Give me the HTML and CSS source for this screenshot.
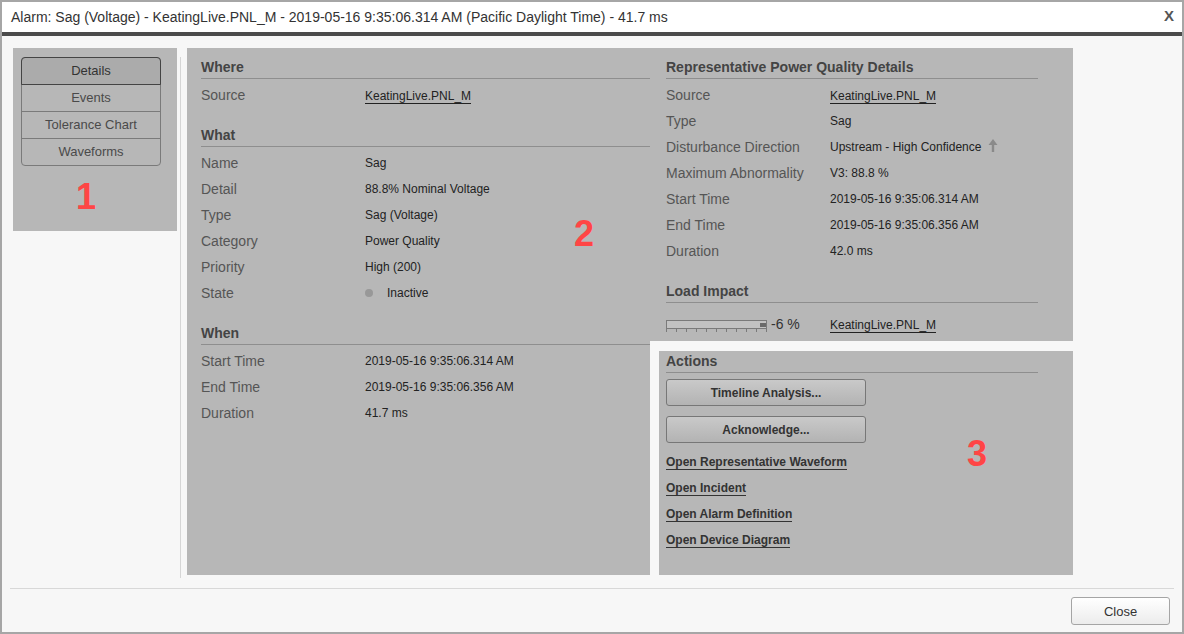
FILE: index.html
```html
<!DOCTYPE html>
<html lang="en">
<head>
    <meta charset="UTF-8">
    <meta name="viewport" content="width=device-width, initial-scale=1.0">
    <title>Alarm Details</title>
    <link rel="stylesheet" href="styles.css">
</head>
<body>
    <div class="dialog">
        <div class="title-bar">
            <span class="title">Alarm: Sag (Voltage) - KeatingLive.PNL_M - 2019-05-16 9:35:06.314 AM (Pacific Daylight Time) - 41.7 ms</span>
            <span class="close-x">X</span>
        </div>

        <div class="dialog-body">
            <div class="nav-panel">
                <ul class="tabs">
                    <li class="tab active">Details</li>
                    <li class="tab">Events</li>
                    <li class="tab">Tolerance Chart</li>
                    <li class="tab">Waveforms</li>
                </ul>
                <span class="marker marker-1">1</span>
            </div>

            <div class="divider"></div>

            <div class="main">
                <span class="marker marker-2">2</span>

                <div class="col col-left">
                    <div class="section">
                        <h3>Where</h3>
                        <div class="row"><span class="label">Source</span><span class="value"><a class="link">KeatingLive.PNL_M</a></span></div>
                    </div>
                    <div class="section">
                        <h3>What</h3>
                        <div class="row"><span class="label">Name</span><span class="value">Sag</span></div>
                        <div class="row"><span class="label">Detail</span><span class="value">88.8% Nominal Voltage</span></div>
                        <div class="row"><span class="label">Type</span><span class="value">Sag (Voltage)</span></div>
                        <div class="row"><span class="label">Category</span><span class="value">Power Quality</span></div>
                        <div class="row"><span class="label">Priority</span><span class="value">High (200)</span></div>
                        <div class="row"><span class="label">State</span><span class="value"><span class="dot"></span>Inactive</span></div>
                    </div>
                    <div class="section">
                        <h3>When</h3>
                        <div class="row"><span class="label">Start Time</span><span class="value">2019-05-16 9:35:06.314 AM</span></div>
                        <div class="row"><span class="label">End Time</span><span class="value">2019-05-16 9:35:06.356 AM</span></div>
                        <div class="row"><span class="label">Duration</span><span class="value">41.7 ms</span></div>
                    </div>
                </div>

                <div class="col-right">
                    <div class="col col-top">
                        <div class="section">
                            <h3>Representative Power Quality Details</h3>
                            <div class="row"><span class="label">Source</span><span class="value"><a class="link">KeatingLive.PNL_M</a></span></div>
                            <div class="row"><span class="label">Type</span><span class="value">Sag</span></div>
                            <div class="row"><span class="label">Disturbance Direction</span><span class="value">Upstream - High Confidence
                                <svg class="arrow" width="10" height="13" viewBox="0 0 10 13"><path d="M5 0 L9.5 6 L6.2 6 L6.2 13 L3.8 13 L3.8 6 L0.5 6 Z" fill="#8a8a8a"/></svg></span></div>
                            <div class="row"><span class="label">Maximum Abnormality</span><span class="value">V3: 88.8 %</span></div>
                            <div class="row"><span class="label">Start Time</span><span class="value">2019-05-16 9:35:06.314 AM</span></div>
                            <div class="row"><span class="label">End Time</span><span class="value">2019-05-16 9:35:06.356 AM</span></div>
                            <div class="row"><span class="label">Duration</span><span class="value">42.0 ms</span></div>
                        </div>
                        <div class="section">
                            <h3>Load Impact</h3>
                            <div class="row impact-row">
                                <span class="label impact">
                                    <svg width="102" height="13" viewBox="0 0 102 13">
                                        <rect x="0.5" y="0.5" width="100" height="8" fill="#c2c2c2" stroke="#7a7a7a"/>
                                        <rect x="94" y="3" width="6" height="4" fill="#6a6a6a"/>
                                        <path d="M0.5 9v3M10.5 9v3M20.5 9v3M30.5 9v3M40.5 9v3M50.5 9v3M60.5 9v3M70.5 9v3M80.5 9v3M90.5 9v3M100.5 9v3" stroke="#7a7a7a"/>
                                    </svg>
                                    <span class="pct">-6 %</span>
                                </span>
                                <span class="value"><a class="link">KeatingLive.PNL_M</a></span>
                            </div>
                        </div>
                    </div>

                    <div class="col actions">
                        <span class="marker marker-3">3</span>
                        <h3>Actions</h3>
                        <button class="action-btn">Timeline Analysis...</button>
                        <button class="action-btn">Acknowledge...</button>
                        <div class="action-links">
                            <a class="action-link">Open Representative Waveform</a>
                            <a class="action-link">Open Incident</a>
                            <a class="action-link">Open Alarm Definition</a>
                            <a class="action-link">Open Device Diagram</a>
                        </div>
                    </div>
                </div>
            </div>
        </div>

        <div class="footer">
            <button class="close-btn">Close</button>
        </div>
    </div>
</body>
</html>
```

FILE: styles.css
```css
* {
    margin: 0;
    padding: 0;
    box-sizing: border-box;
}

body {
    font-family: "Liberation Sans", Arial, sans-serif;
    background: #f7f7f7;
}

.dialog {
    width: 1184px;
    height: 634px;
    border: 2px solid #a6a6a6;
    background: #f7f7f7;
    display: flex;
    flex-direction: column;
}

.title-bar {
    height: 34px;
    background: #fff;
    border-bottom: 4px solid #4b4b4b;
    display: flex;
    justify-content: space-between;
    align-items: center;
    padding: 0 8px 0 9px;
}

.title {
    font-size: 14px;
    color: #333;
}

.close-x {
    font-size: 15px;
    font-weight: bold;
    color: #555;
    margin-top: -3px;
}

.dialog-body {
    display: flex;
    align-items: flex-start;
    padding: 12px 0 0 11px;
    height: 539px;
}

.nav-panel {
    position: relative;
    width: 164px;
    height: 183px;
    background: #b7b7b7;
    padding: 9px 0 0 8px;
}

.tabs {
    list-style: none;
    width: 140px;
    border: 1px solid #7a7a7a;
    border-radius: 4px;
}

.tab {
    height: 27px;
    line-height: 26px;
    text-align: center;
    font-size: 13px;
    color: #4a4a4a;
    border-top: 1px solid #7a7a7a;
}

.tab:first-child {
    border-top: none;
    line-height: 25px;
    height: 26px;
}

.tab.active {
    background: #ababab;
    color: #333;
    outline: 1px solid #444;
    border-radius: 3px 3px 0 0;
}

.marker {
    position: absolute;
    font-size: 36px;
    font-weight: bold;
    line-height: 36px;
    color: #ff4545;
}

.marker-1 { left: 63px; top: 131px; }
.marker-2 { left: 387px; top: 168px; }
.marker-3 { left: 308px; top: 85px; }

.divider {
    width: 1px;
    height: 521px;
    background: #d6d6d6;
    margin: 9px 6px 0 3px;
}

.main {
    position: relative;
    display: flex;
    width: 886px;
    height: 527px;
}

.col {
    background: #b7b7b7;
}

.col-left {
    width: 463px;
    padding: 11px 0 0 14px;
}

.col-right {
    width: 423px;
    display: flex;
    flex-direction: column;
}

.col-top {
    height: 293px;
    padding: 11px 35px 0 16px;
}

.section + .section {
    margin-top: 19px;
}

h3 {
    font-size: 14px;
    font-weight: bold;
    color: #444;
    line-height: 16px;
    padding-bottom: 3px;
    border-bottom: 1px solid #8e8e8e;
    margin-bottom: 3px;
}

.row {
    display: flex;
    align-items: center;
    height: 26px;
}

.label {
    width: 164px;
    flex-shrink: 0;
    font-size: 14px;
    color: #555;
}

.value {
    font-size: 12px;
    color: #222;
    display: flex;
    align-items: center;
}

.link {
    display: inline-block;
    line-height: 14px;
    border-bottom: 1px solid #222;
    margin-top: 2px;
}

.dot {
    width: 8px;
    height: 8px;
    border-radius: 50%;
    background: #989898;
    margin: 0 14px 0 0;
}

.arrow {
    margin-left: 7px;
    margin-top: -3px;
}

.impact-row {
    margin-top: 8px;
}

.impact {
    display: flex;
    align-items: center;
}

.impact svg {
    margin-top: 4px;
}

.pct {
    margin-left: 3px;
    font-size: 14px;
    color: #333;
}

.actions {
    position: relative;
    margin: 10px 0 0 9px;
    height: 224px;
    padding: 2px 35px 0 7px;
}

.actions h3 {
    margin-bottom: 6px;
}

.action-btn {
    display: block;
    width: 200px;
    height: 27px;
    margin-bottom: 10px;
    font-family: inherit;
    font-size: 12px;
    font-weight: bold;
    color: #333;
    background: linear-gradient(#c9c9c9, #b3b3b3);
    border: 1px solid #777;
    border-radius: 3px;
}

.action-links {
    display: flex;
    flex-direction: column;
    align-items: flex-start;
    gap: 11px;
    padding-top: 2px;
}

.action-link {
    line-height: 14px;
    font-size: 12px;
    font-weight: bold;
    color: #333;
    border-bottom: 1px solid #333;
}

.footer {
    margin: 13px 8px 0 8px;
    border-top: 1px solid #d8d8d8;
    display: flex;
    justify-content: flex-end;
    padding: 8px 4px 0 0;
}

.close-btn {
    width: 99px;
    height: 28px;
    font-family: inherit;
    font-size: 13px;
    color: #333;
    background: linear-gradient(#fff, #ececec);
    border: 1px solid #a5a5a5;
    border-radius: 3px;
}
```
